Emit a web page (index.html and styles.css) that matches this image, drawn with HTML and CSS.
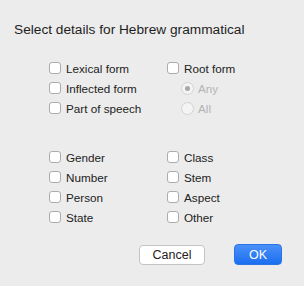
FILE: index.html
```html
<!DOCTYPE html>
<html>
<head>
<meta charset="utf-8">
<link rel="stylesheet" href="styles.css">
</head>
<body>
<div class="dialog">
  <div class="title">Select details for Hebrew grammatical</div>
  <div class="group top">
    <div class="col left">
      <label class="row"><span class="box"></span>Lexical form</label>
      <label class="row"><span class="box"></span>Inflected form</label>
      <label class="row"><span class="box"></span>Part of speech</label>
    </div>
    <div class="col">
      <label class="row"><span class="box"></span>Root form</label>
      <label class="row radio disabled"><span class="dot on"></span>Any</label>
      <label class="row radio disabled"><span class="dot"></span>All</label>
    </div>
  </div>
  <div class="group bottom">
    <div class="col left">
      <label class="row"><span class="box"></span>Gender</label>
      <label class="row"><span class="box"></span>Number</label>
      <label class="row"><span class="box"></span>Person</label>
      <label class="row"><span class="box"></span>State</label>
    </div>
    <div class="col">
      <label class="row"><span class="box"></span>Class</label>
      <label class="row"><span class="box"></span>Stem</label>
      <label class="row"><span class="box"></span>Aspect</label>
      <label class="row"><span class="box"></span>Other</label>
    </div>
  </div>
  <div class="buttons">
    <button class="btn cancel">Cancel</button>
    <button class="btn ok">OK</button>
  </div>
</div>
</body>
</html>
```
FILE: styles.css
```css
html, body {
  margin: 0;
  padding: 0;
  background: #ececec;
}
body {
  width: 304px;
  height: 286px;
  overflow: hidden;
  font-family: "Liberation Sans", Arial, sans-serif;
  color: #222222;
}
.dialog {
  display: flex;
  flex-direction: column;
  padding: 22px 22px 0 14px;
}
.title {
  font-size: 13.7px;
  line-height: 16px;
  color: #1e1e1e;
}
.group {
  display: flex;
  margin-left: 35px;
}
.group.top {
  margin-top: 20px;
}
.group.bottom {
  margin-top: 29px;
}
.col {
  display: flex;
  flex-direction: column;
}
.col.left {
  width: 118px;
}
.row {
  display: flex;
  align-items: center;
  height: 20px;
  font-size: 11.7px;
  gap: 5px;
  white-space: nowrap;
}
.box {
  box-sizing: border-box;
  width: 12px;
  height: 12px;
  background: #ffffff;
  border: 1px solid #acacac;
  border-radius: 3px;
  flex: none;
}
.radio {
  padding-left: 14px;
  gap: 4px;
}
.disabled {
  color: #b4b4b4;
}
.dot {
  box-sizing: border-box;
  width: 13px;
  height: 13px;
  border-radius: 50%;
  background: #f4f4f4;
  border: 1px solid #d2d2d2;
  display: flex;
  align-items: center;
  justify-content: center;
  flex: none;
}
.dot.on::after {
  content: "";
  width: 5px;
  height: 5px;
  border-radius: 50%;
  background: #a8a8a8;
}
.buttons {
  display: flex;
  justify-content: flex-end;
  align-items: center;
  gap: 29px;
  margin-top: 17px;
}
.btn {
  font-family: "Liberation Sans", Arial, sans-serif;
  font-size: 12.5px;
  padding: 0;
  box-sizing: border-box;
}
.cancel {
  width: 66px;
  height: 20px;
  background: #ffffff;
  border: 1px solid #c4c4c4;
  border-radius: 4px;
  color: #222222;
}
.ok {
  width: 48px;
  height: 21px;
  background: linear-gradient(#4a90f8, #1b6ff0);
  border: 1px solid #2a73e8;
  border-radius: 4px;
  color: #ffffff;
}
```
